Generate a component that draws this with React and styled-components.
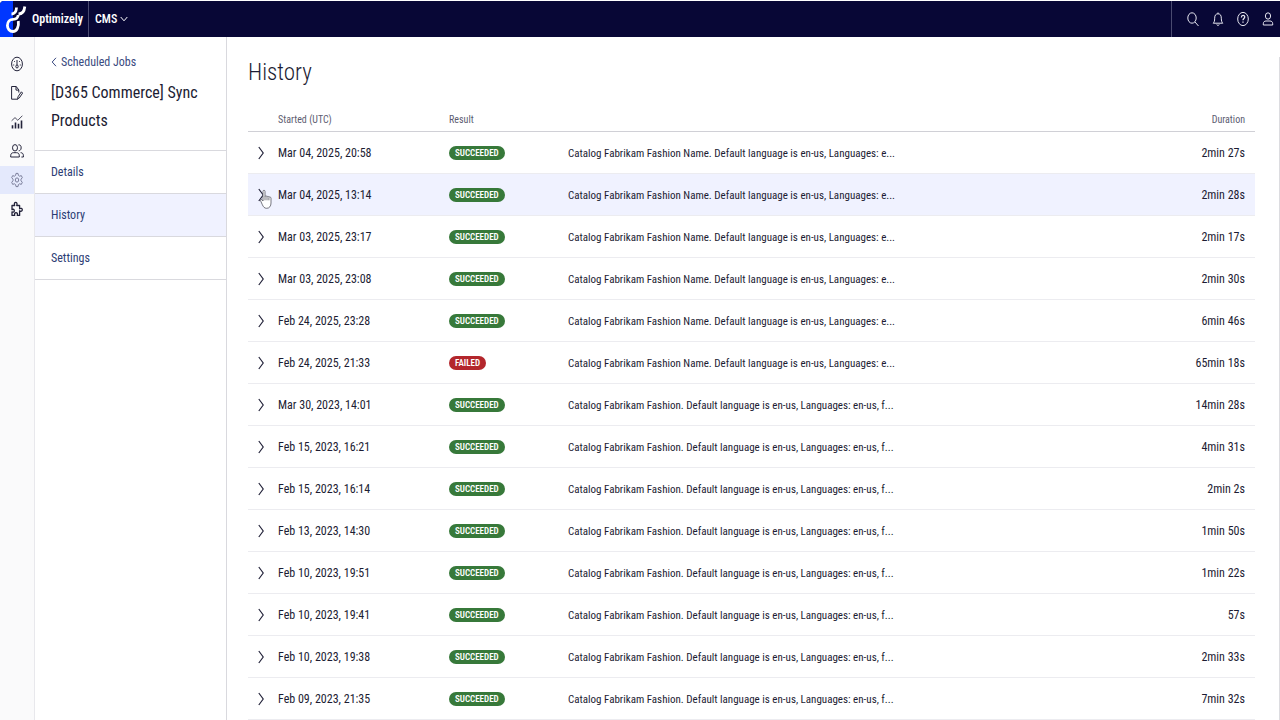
import styled, { createGlobalStyle } from "styled-components";

const DEFAULT_NAME = "Catalog Fabrikam Fashion Name. Default language is en-us, Languages: e...";
const DEFAULT_FASHION = "Catalog Fabrikam Fashion. Default language is en-us, Languages: en-us, f...";

const jobs = [
  { started: "Mar 04, 2025, 20:58", result: "SUCCEEDED", message: DEFAULT_NAME, duration: "2min 27s" },
  { started: "Mar 04, 2025, 13:14", result: "SUCCEEDED", message: DEFAULT_NAME, duration: "2min 28s", hovered: true },
  { started: "Mar 03, 2025, 23:17", result: "SUCCEEDED", message: DEFAULT_NAME, duration: "2min 17s" },
  { started: "Mar 03, 2025, 23:08", result: "SUCCEEDED", message: DEFAULT_NAME, duration: "2min 30s" },
  { started: "Feb 24, 2025, 23:28", result: "SUCCEEDED", message: DEFAULT_NAME, duration: "6min 46s" },
  { started: "Feb 24, 2025, 21:33", result: "FAILED", message: DEFAULT_NAME, duration: "65min 18s" },
  { started: "Mar 30, 2023, 14:01", result: "SUCCEEDED", message: DEFAULT_FASHION, duration: "14min 28s" },
  { started: "Feb 15, 2023, 16:21", result: "SUCCEEDED", message: DEFAULT_FASHION, duration: "4min 31s" },
  { started: "Feb 15, 2023, 16:14", result: "SUCCEEDED", message: DEFAULT_FASHION, duration: "2min 2s" },
  { started: "Feb 13, 2023, 14:30", result: "SUCCEEDED", message: DEFAULT_FASHION, duration: "1min 50s" },
  { started: "Feb 10, 2023, 19:51", result: "SUCCEEDED", message: DEFAULT_FASHION, duration: "1min 22s" },
  { started: "Feb 10, 2023, 19:41", result: "SUCCEEDED", message: DEFAULT_FASHION, duration: "57s" },
  { started: "Feb 10, 2023, 19:38", result: "SUCCEEDED", message: DEFAULT_FASHION, duration: "2min 33s" },
  { started: "Feb 09, 2023, 21:35", result: "SUCCEEDED", message: DEFAULT_FASHION, duration: "7min 32s" },
];

const tabs = ["Details", "History", "Settings"];

const SearchIcon = () => (
  <StIcon viewBox="0 0 12 16">
    <ellipse cx="5" cy="7" rx="4.2" ry="5.2" />
    <path d="M8 11l3.500 4" />
  </StIcon>
);

const BellIcon = () => (
  <StIcon viewBox="0 0 12 16">
    <path d="M1.200 12.200c1-1 1.500-2.200 1.500-5C2.700 4 4 2.800 6 2.800S9.300 4 9.300 7.200c0 2.800.5 4 1.500 5z" />
    <path d="M6 1.500v1.300M4.800 13.500c.3 1.200 2.100 1.200 2.400 0" />
  </StIcon>
);

const HelpIcon = () => (
  <StIcon viewBox="0 0 12 16">
    <ellipse cx="6" cy="8" rx="5.300" ry="6.600" />
    <path d="M4.400 6.400c0-2.600 3.300-2.500 3.300-.4C7.700 7.500 6 7.500 6 9.200M6 10.600v1.200" strokeWidth="1.300" />
  </StIcon>
);

const UserIcon = () => (
  <StIcon viewBox="0 0 12 16">
    <ellipse cx="6" cy="5" rx="2.600" ry="3.200" />
    <path d="M1.300 14v-1.200C1.300 10.800 2.600 10 4 10h4c1.400 0 2.700.8 2.700 2.800V14z" />
  </StIcon>
);

const GaugeIcon = () => (
  <StIcon viewBox="0 0 12 16">
    <ellipse cx="6" cy="8" rx="5.400" ry="6.800" />
    <ellipse cx="6" cy="10.500" rx="1.200" ry="1.500" />
    <path d="M6 4v5M3.500 5.200v.8M8.500 5.200v.8M2.700 8.500v1M9.300 8.500v1" />
  </StIcon>
);

const EditIcon = () => (
  <StIcon viewBox="0 0 12 16">
    <path d="M7 14.200H.6V1.500h4.600l2.600 3.400v2.600M5 1.500v3.600h2.800" />
    <path d="M7 11.800l3.400-5 1.200 1.300-3.400 5-1.600.6z" />
  </StIcon>
);

const ChartIcon = () => (
  <StIcon viewBox="0 0 12 16">
    <path d="M.6 6.800L4 3.600l2.800 2.700 4.600-4.600" strokeWidth="0.800" />
    <path d="M1.500 14.500v-3.200M4.500 14.500V8.600M7.500 14.500V9.800M10.500 14.500V6.600" strokeWidth="1.600" />
  </StIcon>
);

const PeopleIcon = () => (
  <StIcon viewBox="0 0 14 16">
    <ellipse cx="5" cy="4.800" rx="2.500" ry="3.200" />
    <path d="M.7 14v-1.200C.7 10.500 2 9.700 3.500 9.700h3c1.500 0 2.800.8 2.800 3.100V14zM8.400 1.900c3.600-.9 3.700 6 .3 5.900M10.600 9.700c1.800 0 2.800 1 2.800 3.100V14h-2" />
  </StIcon>
);

const GearIcon = () => (
  <StIcon viewBox="0 0 12 16">
    <path d="M5 1.400h2l.4 2 1.200.8 1.700-.6 1 2.100-1.300 1.500v1.600l1.300 1.500-1 2.100-1.700-.6-1.200.8-.4 2H5l-.4-2-1.200-.8-1.700.6-1-2.100L2 8.800V7.200L.7 5.700l1-2.100 1.700.6 1.200-.8z" />
    <ellipse cx="6" cy="8" rx="1.700" ry="2.100" />
  </StIcon>
);

const PuzzleIcon = () => (
  <StIcon viewBox="0 0 12 16">
    <path
      d="M1 4.500h2.700C2.900 2.800 3.600 1.300 4.700 1.300s1.800 1.500 1 3.200h2.900v3.300c1.300-1 2.700-.4 2.700 1s-1.400 2-2.700 1v4.600H6.300c.5-1.700-.2-2.700-1.300-2.700s-1.800 1-1.300 2.700H1v-3.600c1.300.8 2.300.2 2.300-1.100S2.300 7.800 1 8.600z"
      strokeWidth="1.300"
    />
  </StIcon>
);

const railItems = [
  { name: "Dashboard", icon: <GaugeIcon /> },
  { name: "Edit", icon: <EditIcon /> },
  { name: "Reports", icon: <ChartIcon /> },
  { name: "Audiences", icon: <PeopleIcon /> },
  { name: "Settings", icon: <GearIcon />, active: true },
  { name: "Add-ons", icon: <PuzzleIcon /> },
];

const App = () => {
  return (
    <>
      <GlobalStyle />
      <StTopBar>
        <StBrand href="#">
          <StLogo viewBox="0 0 30 36" aria-hidden="true">
            <rect width="13" height="36" fill="#0037ff" stroke="none" />
            <path d="M18.300 20c.9 6-1.700 10.500-5.300 10.500-3.400 0-5.600-2.600-5.600-6 0-3.700 2.600-6.200 5.600-6.200 3.200 0 5-1.500 5.200-4.300" />
            <path d="M11.500 13c3.200 0 4.800-2 5-6.500M18.500 13c3.400 0 5.800-2.500 6.300-7.500" />
          </StLogo>
          Optimizely
        </StBrand>
        <StProduct>
          CMS
          <StCaret viewBox="0 0 8 6">
            <path d="M.7 1L4 4.800 7.300 1" />
          </StCaret>
        </StProduct>
        <StTools>
          <StTool aria-label="Search"><SearchIcon /></StTool>
          <StTool aria-label="Notifications"><BellIcon /></StTool>
          <StTool aria-label="Help"><HelpIcon /></StTool>
          <StTool aria-label="Account"><UserIcon /></StTool>
        </StTools>
      </StTopBar>
      <StBody>
        <StRail>
          {railItems.map((item) => (
            <StRailBtn key={item.name} aria-label={item.name} $active={item.active}>
              {item.icon}
            </StRailBtn>
          ))}
        </StRail>
        <StSide>
          <StSideHead>
            <StBack href="#">
              <StBackIcon viewBox="0 0 6 10">
                <path d="M5 .8L1.200 5 5 9.200" />
              </StBackIcon>
              Scheduled Jobs
            </StBack>
            <StJobName>[D365 Commerce] Sync Products</StJobName>
          </StSideHead>
          {tabs.map((tab) => (
            <StTab key={tab} href="#" $active={tab === "History"}>
              {tab}
            </StTab>
          ))}
        </StSide>
        <StMain>
          <StPage>
            <StTitle>History</StTitle>
            <StTable>
              <colgroup>
                <StCol $w={30} />
                <StCol $w={171} />
                <StCol $w={119} />
                <col />
                <StCol $w={90} />
              </colgroup>
              <thead>
                <tr>
                  <StTh />
                  <StTh>Started (UTC)</StTh>
                  <StTh>Result</StTh>
                  <StTh />
                  <StTh $right>Duration</StTh>
                </tr>
              </thead>
              <tbody>
                {jobs.map((job) => (
                  <StRow key={job.started} $hovered={job.hovered}>
                    <StTd>
                      <StExpand aria-label="Expand">
                        <StChevron viewBox="0 0 6 14">
                          <path d="M.8 1l4.400 6L.8 13" />
                        </StChevron>
                        {job.hovered && (
                          <StHand viewBox="0 0 12 20">
                            <path d="M3 12V2.500C3 .8 5 .8 5 2.500v5c.3-1 1.900-.9 2 .3.400-.9 1.800-.7 1.900.5.500-.7 2-.5 2.100.9V14c0 3-1.500 5.300-4.300 5.300-2.400 0-3.300-1.400-4.300-3.500L.7 12c-.5-1.300.7-2 1.400-1.200z" />
                            <path d="M5 7.500v3.800M7 8v3.300M8.900 8.500v2.800" />
                          </StHand>
                        )}
                      </StExpand>
                    </StTd>
                    <StTd>{job.started}</StTd>
                    <StTd>
                      <StBadge $failed={job.result === "FAILED"}>{job.result}</StBadge>
                    </StTd>
                    <StMessage>{job.message}</StMessage>
                    <StTd $right>{job.duration}</StTd>
                  </StRow>
                ))}
              </tbody>
            </StTable>
          </StPage>
        </StMain>
      </StBody>
    </>
  );
};

export default App;

const GlobalStyle = createGlobalStyle`
  * {
    box-sizing: border-box;
  }
  body {
    margin: 0;
    overflow: hidden;
    background-color: white;
    color: #1c1c33;
    font-family: "Roboto Condensed", Roboto, Inter, sans-serif;
    font-size: 12px;
  }
  #root {
    height: 100vh;
    display: flex;
    flex-direction: column;
  }
  button {
    padding: 0;
    border: none;
    background: none;
    color: inherit;
    font: inherit;
    cursor: pointer;
  }
  a {
    color: inherit;
    text-decoration: none;
  }
`;

const StTopBar = styled.header`
  flex: none;
  height: 36px;
  margin-top: 1px;
  display: flex;
  background-color: #080736;
  border-top-left-radius: 4px;
  overflow: hidden;
  color: white;
`;

const StBrand = styled.a`
  width: 89px;
  display: flex;
  align-items: center;
  gap: 2px;
  border-right: 1px solid #4a4a70;
  font-size: 12px;
  font-weight: 600;
`;

const StLogo = styled.svg`
  width: 30px;
  height: 36px;
  fill: none;
  stroke: white;
  stroke-width: 2.800;
`;

const StProduct = styled.button`
  display: flex;
  align-items: center;
  gap: 3px;
  padding: 0 6px;
  font-weight: 500;
`;

const StCaret = styled.svg`
  width: 8px;
  height: 6px;
  fill: none;
  stroke: white;
`;

const StTools = styled.div`
  margin-left: auto;
  padding: 0 6px 0 15px;
  display: flex;
  align-items: center;
  gap: 13px;
  border-left: 1px solid #4a4a70;
`;

const StTool = styled.button`
  width: 12px;
  height: 16px;
  display: flex;
  justify-content: center;
  color: #e6e6f0;
`;

const StIcon = styled.svg`
  height: 16px;
  fill: none;
  stroke: currentColor;
  stroke-width: 1;
  stroke-linejoin: round;
`;

const StBody = styled.div`
  flex: 1;
  min-height: 0;
  display: flex;
`;

const StRail = styled.nav`
  flex: none;
  width: 35px;
  padding-top: 13px;
  display: flex;
  flex-direction: column;
  gap: 1px;
  background-color: #fafafb;
  border-right: 1px solid #e8e8ec;
`;

const StRailBtn = styled.button`
  height: 28px;
  display: flex;
  align-items: center;
  justify-content: center;
  background-color: ${(p) => (p.$active ? "#e4e9fc" : "transparent")};
  color: ${(p) => (p.$active ? "#7d809c" : "#23233a")};
`;

const StSide = styled.aside`
  flex: none;
  width: 192px;
  border-right: 1px solid #d9d9de;
`;

const StSideHead = styled.div`
  height: 114px;
  padding: 17px 16px 0;
  border-bottom: 1px solid #d9d9de;
`;

const StBack = styled.a`
  display: flex;
  align-items: center;
  gap: 4px;
  color: #3a4a80;
  line-height: 16px;
`;

const StBackIcon = styled.svg`
  width: 6px;
  height: 10px;
  fill: none;
  stroke: currentColor;
`;

const StJobName = styled.h2`
  margin: 9px 0 0;
  font-size: 16px;
  font-weight: 400;
  line-height: 28px;
`;

const StTab = styled.a`
  height: 43px;
  padding: 0 16px;
  display: flex;
  align-items: center;
  border-bottom: 1px solid #d9d9de;
  background-color: ${(p) => (p.$active ? "#f0f2ff" : "white")};
  color: #2c3c74;
`;

const StMain = styled.main`
  flex: 1;
  min-width: 0;
  padding-top: 20px;
`;

const StPage = styled.section`
  height: 100%;
  padding: 0 24px 0 21px;
  border-right: 1px solid #dcdce0;
`;

const StTitle = styled.h1`
  margin: 0 0 18px;
  font-size: 23px;
  font-weight: 300;
  line-height: 32px;
`;

const StTable = styled.table`
  width: 100%;
  table-layout: fixed;
  border-collapse: collapse;
`;

const StCol = styled.col`
  width: ${(p) => p.$w}px;
`;

const StTh = styled.th`
  height: 24px;
  padding: ${(p) => (p.$right ? "2px 10px 0 0" : "2px 0 0")};
  border-bottom: 1px solid #d0d0d6;
  color: #5c5c70;
  font-size: 10px;
  font-weight: 400;
  text-align: ${(p) => (p.$right ? "right" : "left")};
`;

const StRow = styled.tr`
  background-color: ${(p) => (p.$hovered ? "#f0f2ff" : "white")};
`;

const StTd = styled.td`
  height: 42px;
  padding: ${(p) => (p.$right ? "2px 10px 0 0" : "2px 0 0")};
  border-bottom: 1px solid #ececf0;
  text-align: ${(p) => (p.$right ? "right" : "left")};
  white-space: nowrap;
`;

const StMessage = styled(StTd)`
  font-size: 11px;
`;

const StExpand = styled.button`
  position: relative;
  width: 26px;
  height: 24px;
  display: flex;
  align-items: center;
  justify-content: center;
`;

const StChevron = styled.svg`
  width: 6px;
  height: 14px;
  fill: none;
  stroke: #23233a;
  stroke-width: 1.200;
`;

const StHand = styled.svg`
  position: absolute;
  left: 12px;
  top: 6px;
  width: 12px;
  height: 20px;
  fill: white;
  stroke: #55555f;
  stroke-width: 0.800;
`;

const StBadge = styled.span`
  display: inline-block;
  padding: 0 6px;
  border-radius: 7px;
  background-color: ${(p) => (p.$failed ? "#b3262c" : "#37793a")};
  color: white;
  font-size: 9px;
  font-weight: 600;
  line-height: 14px;
  vertical-align: middle;
`;
